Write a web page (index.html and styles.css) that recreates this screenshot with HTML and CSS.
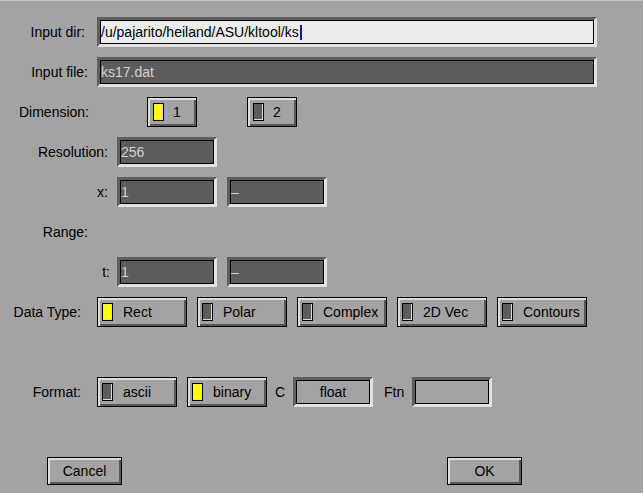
FILE: index.html
```html
<!DOCTYPE html>
<html>
<head>
<meta charset="utf-8">
<link rel="stylesheet" href="styles.css">
</head>
<body>
<div class="win">
  <div class="row">
    <span class="lbl l-dir">Input dir:</span>
    <div class="field light wide"><span>/u/pajarito/heiland/ASU/kltool/ks</span><span class="cursor"></span></div>
  </div>
  <div class="row">
    <span class="lbl l-file">Input file:</span>
    <div class="field dark wide"><span>ks17.dat</span></div>
  </div>
  <div class="row">
    <span class="lbl l-dim">Dimension:</span>
    <div class="btn dim"><span class="ind on"></span><span>1</span></div>
    <div class="btn dim gap50"><span class="ind"></span><span>2</span></div>
  </div>
  <div class="row">
    <span class="lbl l-res">Resolution:</span>
    <div class="field dark small"><span>256</span></div>
  </div>
  <div class="row">
    <span class="lbl l-x">x:</span>
    <div class="field dark small"><span>1</span></div>
    <div class="field dark small gap10"><span>–</span></div>
  </div>
  <div class="row">
    <span class="lbl l-range">Range:</span>
  </div>
  <div class="row">
    <span class="lbl l-t">t:</span>
    <div class="field dark small"><span>1</span></div>
    <div class="field dark small gap10"><span>–</span></div>
  </div>
  <div class="row">
    <span class="lbl l-type">Data Type:</span>
    <div class="btn opt"><span class="ind on"></span><span>Rect</span></div>
    <div class="btn opt gap10"><span class="ind"></span><span>Polar</span></div>
    <div class="btn opt gap10"><span class="ind"></span><span>Complex</span></div>
    <div class="btn opt gap10"><span class="ind"></span><span>2D Vec</span></div>
    <div class="btn opt gap10"><span class="ind"></span><span>Contours</span></div>
  </div>
  <div class="row spaced">
    <span class="lbl l-fmt">Format:</span>
    <div class="btn opt fmt"><span class="ind"></span><span>ascii</span></div>
    <div class="btn opt fmt gap10"><span class="ind on"></span><span>binary</span></div>
    <span class="lbl-c">C</span>
    <div class="field gray fmtfield"><span>float</span></div>
    <span class="lbl-ftn">Ftn</span>
    <div class="field gray fmtfield"></div>
  </div>
  <div class="row spaced bottom">
    <div class="btn push">Cancel</div>
    <div class="btn push ok">OK</div>
  </div>
</div>
</body>
</html>
```
FILE: styles.css
```css
html, body {
  margin: 0;
  padding: 0;
  background: #a3a3a3;
}
body {
  width: 643px;
  height: 493px;
  overflow: hidden;
  font-family: "Liberation Sans", Arial, sans-serif;
  font-size: 14px;
  color: #000;
}
.win {
  border-top: 1px solid #c2c2c2;
  padding-top: 16px;
  display: flex;
  flex-direction: column;
  gap: 10px;
}
.row {
  display: flex;
  align-items: center;
  height: 30px;
}
.row.spaced {
  margin-top: 40px;
}
.lbl {
  box-sizing: border-box;
  flex: none;
  text-align: right;
  white-space: nowrap;
}
.l-dir { width: 97px; padding-right: 12px; }
.l-file { width: 97px; padding-right: 9px; }
.l-dim { width: 147px; padding-right: 58px; }
.l-res { width: 117px; padding-right: 9px; }
.l-x { width: 117px; padding-right: 9px; }
.l-range { width: 117px; padding-right: 29px; }
.l-t { width: 117px; padding-right: 7px; }
.l-type { width: 97px; padding-right: 16px; }
.l-fmt { width: 97px; padding-right: 16px; }

.field {
  box-sizing: border-box;
  height: 30px;
  border: 3px solid;
  border-color: #5e5e5e #e2e2e2 #e2e2e2 #5e5e5e;
  box-shadow: inset 0 0 0 1px #000;
  display: flex;
  align-items: center;
  padding-left: 1px;
  white-space: nowrap;
  flex: none;
}
.field.light { background: #ececec; color: #000; }
.field.dark { background: #5c5c5c; color: #d2d2d2; }
.field.gray { background: #a3a3a3; color: #000; justify-content: center; padding-left: 0; }
.wide { width: 500px; }
.small { width: 100px; }
.fmtfield { width: 80px; }
.gap10 { margin-left: 10px; }
.gap50 { margin-left: 50px; }

.cursor {
  display: inline-block;
  width: 2px;
  height: 15px;
  background: #1414b8;
  margin-left: 1px;
}

.btn {
  box-sizing: border-box;
  height: 30px;
  border: 1px solid #000;
  background: #a3a3a3;
  box-shadow: inset 2px 2px 0 #dcdcdc, inset -2px -2px 0 #585858;
  display: flex;
  align-items: center;
  flex: none;
  white-space: nowrap;
}
.dim {
  width: 50px;
  padding-left: 5px;
  gap: 9px;
}
.opt {
  width: 90px;
  padding-left: 4px;
  gap: 10px;
}
.opt.fmt { width: 80px; }
.ind {
  box-sizing: border-box;
  width: 11px;
  height: 18px;
  border: 1px solid #000;
  background: #5c5c5c;
  box-shadow: inset -1px -1px 0 #dadada;
  flex: none;
}
.ind.on { background: #ffff00; }

.lbl-c {
  width: 26px;
  text-align: center;
  flex: none;
}
.lbl-ftn {
  width: 39px;
  box-sizing: border-box;
  padding-left: 11px;
  flex: none;
}

.bottom {
  height: 28px;
}
.push {
  width: 75px;
  height: 28px;
  justify-content: center;
  margin-left: 47px;
}
.push.ok {
  margin-left: 325px;
}
```
